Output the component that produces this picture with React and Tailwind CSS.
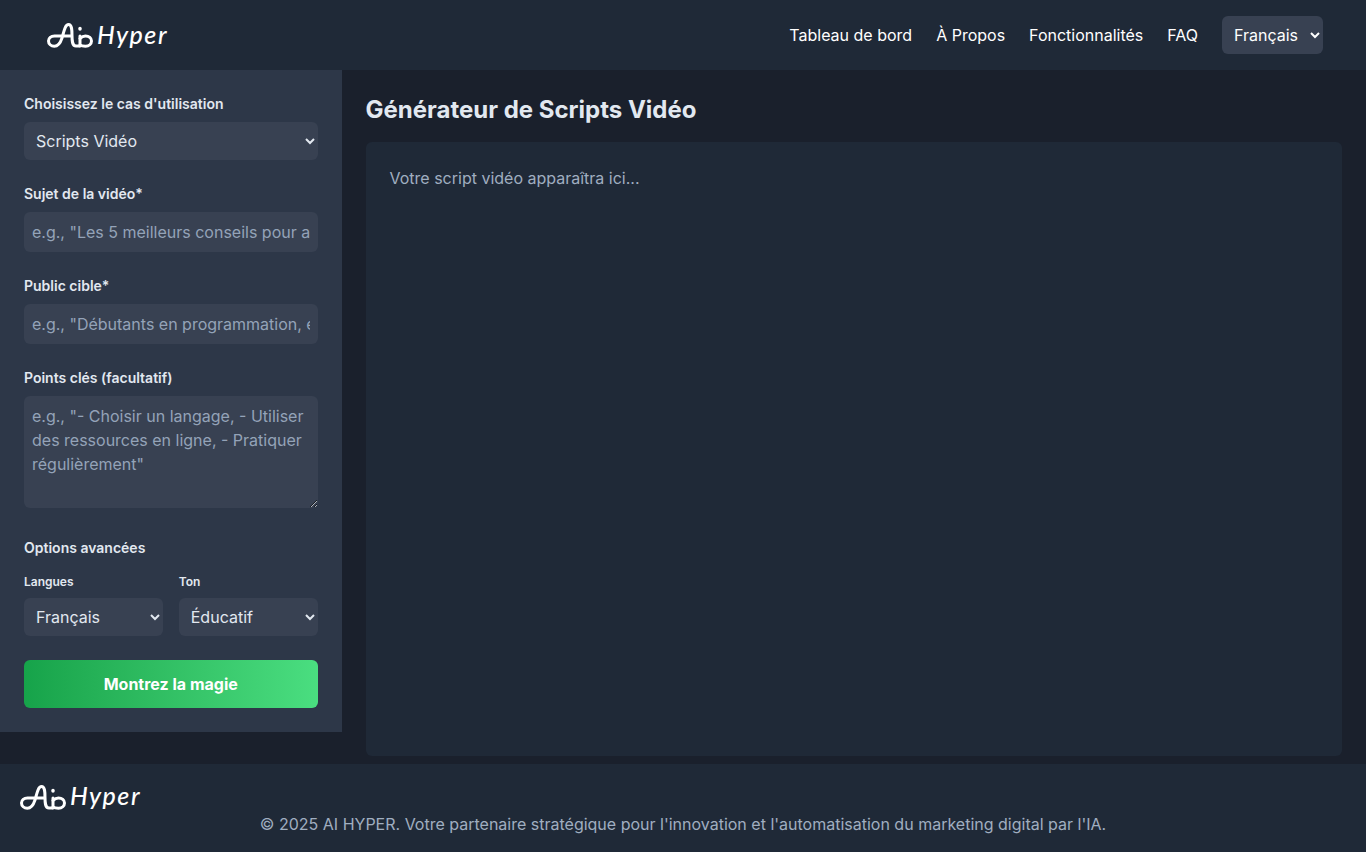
import React from "react";

const Logo = ({ className = "" }) => (
  <div className={`flex items-center ${className}`}>
    <svg width="48" height="26" viewBox="0 0 48 26" fill="none" stroke="white" strokeWidth="3" strokeLinecap="round" strokeLinejoin="round">
      <path d="M26 14H8.500C5 14 2.500 16 2.500 19s2.500 5.200 5.800 5.200c4 0 6.200-3.500 7.700-8.200C18 9.500 19 2.500 22.500 2.500c3.500 0 3.500 6 3.500 11 0 5 0 10.500 4 10.500h3" />
      <path d="M34 14v10" />
      <path d="M34 6.500v.500" strokeWidth="3.500" />
      <path d="M34 16.500c1.500-1.500 3.500-2.500 5.500-2.500 3.500 0 6 2.200 6 5s-2.500 5.200-6 5.200c-2.500 0-4.500-.500-5.500-1.200" />
    </svg>
    <span className="mb-[2px] ml-[3px] font-['Lato',sans-serif] text-[25px] leading-none font-medium tracking-[1.5px] text-white italic">Hyper</span>
  </div>
);

const fieldClass =
  "w-full rounded-md bg-[#384152] px-2 text-base text-[#e2e8f0] placeholder:text-[#94a3b8] outline-none";

const Label = ({ children }) => (
  <label className="mb-2 block text-sm leading-5 font-semibold text-[#e2e8f0]">{children}</label>
);

const Select = ({ options, className = "" }) => (
  <select className={`h-[38px] w-full rounded-md bg-[#384152] px-2 text-base text-[#e2e8f0] outline-none ${className}`}>
    {options.map((o) => (
      <option key={o}>{o}</option>
    ))}
  </select>
);

export default function App() {
  return (
    <div className="flex min-h-[852px] flex-col bg-[#1a202c] font-['Inter',sans-serif]">
      <header className="flex h-[70px] items-center justify-between bg-[#1f2937] pr-[43px] pl-[46px]">
        <Logo />
        <nav className="flex items-center gap-6 text-base text-white">
          <a href="#">Tableau de bord</a>
          <a href="#">À Propos</a>
          <a href="#">Fonctionnalités</a>
          <a href="#">FAQ</a>
          <select className="h-[38px] w-[101px] rounded-md bg-[#384152] px-2 text-base text-white outline-none">
            <option>Français</option>
          </select>
        </nav>
      </header>

      <div className="flex h-[694px]">
        <aside className="h-[662px] w-1/4 shrink-0 bg-[#2d3748] p-6">
          <div className="mb-6">
            <Label>Choisissez le cas d'utilisation</Label>
            <Select options={["Scripts Vidéo"]} />
          </div>
          <div className="mb-6">
            <Label>Sujet de la vidéo*</Label>
            <input className={`${fieldClass} h-10`} placeholder={'e.g., "Les 5 meilleurs conseils pour apprendre à coder"'} />
          </div>
          <div className="mb-6">
            <Label>Public cible*</Label>
            <input className={`${fieldClass} h-10`} placeholder={'e.g., "Débutants en programmation, étudiants"'} />
          </div>
          <div className="mb-[30px]">
            <Label>Points clés (facultatif)</Label>
            <textarea
              className={`${fieldClass} block h-[112px] py-2 leading-6`}
              placeholder={'e.g., "- Choisir un langage, - Utiliser des ressources en ligne, - Pratiquer régulièrement"'}
            />
          </div>
          <h3 className="mb-4 text-sm leading-5 font-semibold text-[#e2e8f0]">Options avancées</h3>
          <div className="mb-6 grid grid-cols-2 gap-4">
            <div>
              <label className="mb-2 block text-xs leading-4 font-semibold text-[#e2e8f0]">Langues</label>
              <Select options={["Français"]} />
            </div>
            <div>
              <label className="mb-2 block text-xs leading-4 font-semibold text-[#e2e8f0]">Ton</label>
              <Select options={["Éducatif"]} />
            </div>
          </div>
          <button className="h-12 w-full rounded-md bg-gradient-to-r from-[#16a34a] to-[#4ade80] text-base font-bold text-white">
            Montrez la magie
          </button>
        </aside>

        <main className="flex flex-1 flex-col px-6 pt-6 pb-2">
          <h1 className="mb-4 text-2xl font-bold text-[#e2e8f0]">Générateur de Scripts Vidéo</h1>
          <div className="flex-1 rounded-md bg-[#1f2937] p-6 text-base text-[#a0aec0]">Votre script vidéo apparaîtra ici...</div>
        </main>
      </div>

      <footer className="flex h-[88px] flex-col bg-[#1f2937] px-[19px] pt-[19px]">
        <Logo />
        <p className="mt-[2px] text-center text-base text-[#a0aec0]">
          © 2025 AI HYPER. Votre partenaire stratégique pour l'innovation et l'automatisation du marketing digital par l'IA.
        </p>
      </footer>
    </div>
  );
}
